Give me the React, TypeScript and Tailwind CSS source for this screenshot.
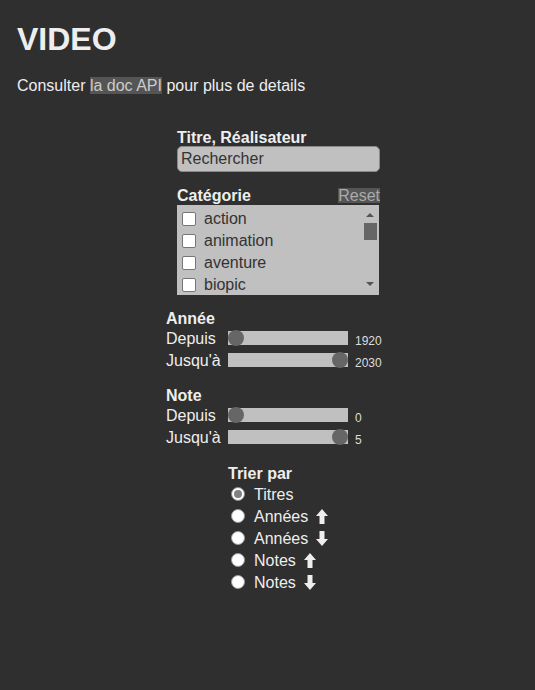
import React from 'react';

const categories = ['action', 'animation', 'aventure', 'biopic', 'comédie', 'drame'];

const sortOptions = [
  { label: 'Titres', dir: null, checked: true },
  { label: 'Années', dir: 'up', checked: false },
  { label: 'Années', dir: 'down', checked: false },
  { label: 'Notes', dir: 'up', checked: false },
  { label: 'Notes', dir: 'down', checked: false },
];

function Arrow({ dir }: { dir: string }) {
  return (
    <svg
      width="12"
      height="15"
      viewBox="0 0 12 15"
      className={dir === 'down' ? 'ml-[8px] rotate-180' : 'ml-[8px]'}
    >
      <path d="M6 0 L12 7 L8.5 7 L8.5 15 L3.5 15 L3.5 7 L0 7 Z" fill="#eeeeee" />
    </svg>
  );
}

function Slider({ label, value, atMax }: { label: string; value: string; atMax: boolean }) {
  return (
    <div className="flex h-[22px] items-center">
      <span className="w-[62px] pt-[2px] leading-[20px]">{label}</span>
      <div className={`flex h-[14px] w-[120px] items-center bg-[#c0c0c0] ${atMax ? 'justify-end' : 'justify-start'}`}>
        <div className="h-[16px] w-[16px] rounded-full bg-[#666666]" />
      </div>
      <span className="ml-[7px] mt-[5px] text-[12px] leading-[14px] text-[#dddddd]">{value}</span>
    </div>
  );
}

function Range({ title, min, max }: { title: string; min: string; max: string }) {
  return (
    <div className="w-[225px]">
      <div className="pt-[1px] font-bold leading-[17px]">{title}</div>
      <Slider label="Depuis" value={min} atMax={false} />
      <Slider label="Jusqu'à" value={max} atMax={true} />
    </div>
  );
}

export default function App() {
  return (
    <div className="min-h-screen bg-[#2f2f2f] text-[16px] text-[#eeeeee] font-['Liberation_Sans',Arial,sans-serif]">
      <div className="px-[17px] pt-[21px]">
        <h1 className="text-[32px] font-bold leading-[37px]">VIDEO</h1>
        <p className="mt-[19px] leading-[18px]">
          Consulter <span className="bg-[#555555] text-[#cccccc]">la doc API</span> pour plus de details
        </p>
      </div>

      <div className="mt-[34px] flex flex-col items-center pl-[22px]">
        <div className="w-[203px]">
          <div className="font-bold leading-[17px]">Titre, Réalisateur</div>
          <div className="flex h-[26px] items-center rounded-[5px] border border-[#8a8a8a] bg-[#c0c0c0] pl-[3px] text-[#333333]">
            Rechercher
          </div>

          <div className="mt-[14px] flex h-[19px] items-start justify-between">
            <span className="font-bold leading-[19px]">Catégorie</span>
            <span className="mt-[2px] bg-[#555555] leading-[15px] text-[#aaaaaa]">Reset</span>
          </div>
          <div className="flex h-[90px] w-[202px] bg-[#c0c0c0]">
            <div className="flex-1 overflow-hidden pt-[3px]">
              {categories.map((c) => (
                <div key={c} className="flex h-[22px] items-center text-[#333333]">
                  <span className="ml-[5px] h-[14px] w-[14px] rounded-[2px] border border-[#767676] bg-white" />
                  <span className="ml-[8px] leading-[22px]">{c}</span>
                </div>
              ))}
            </div>
            <div className="mr-[2px] flex w-[14px] flex-col items-center">
              <svg width="8" height="4" viewBox="0 0 8 4" className="mt-[8px]">
                <path d="M4 0 L8 4 L0 4 Z" fill="#555555" />
              </svg>
              <div className="mt-[6px] h-[17px] w-[13px] bg-[#666666]" />
              <div className="flex-1" />
              <svg width="8" height="4" viewBox="0 0 8 4" className="mb-[9px]">
                <path d="M0 0 L8 0 L4 4 Z" fill="#555555" />
              </svg>
            </div>
          </div>
        </div>

        <div className="mt-[14px]">
          <Range title="Année" min="1920" max="2030" />
        </div>
        <div className="mt-[15px]">
          <Range title="Note" min="0" max="5" />
        </div>

        <div className="mt-[17px] w-[101px]">
          <div className="font-bold leading-[18px]">Trier par</div>
          {sortOptions.map((o, i) => (
            <div key={i} className="flex h-[22px] items-center">
              {o.checked ? (
                <span className="ml-[3px] -mt-[1px] flex h-[14px] w-[14px] items-center justify-center rounded-full border border-[#8a8a8a] bg-white">
                  <span className="h-[8px] w-[8px] rounded-full bg-[#808080]" />
                </span>
              ) : (
                <span className="ml-[3px] -mt-[1px] h-[14px] w-[14px] rounded-full border border-[#9a9a9a] bg-white" />
              )}
              <span className="ml-[9px] pt-[2px] leading-[20px]">{o.label}</span>
              {o.dir && <Arrow dir={o.dir} />}
            </div>
          ))}
        </div>
      </div>
    </div>
  );
}
